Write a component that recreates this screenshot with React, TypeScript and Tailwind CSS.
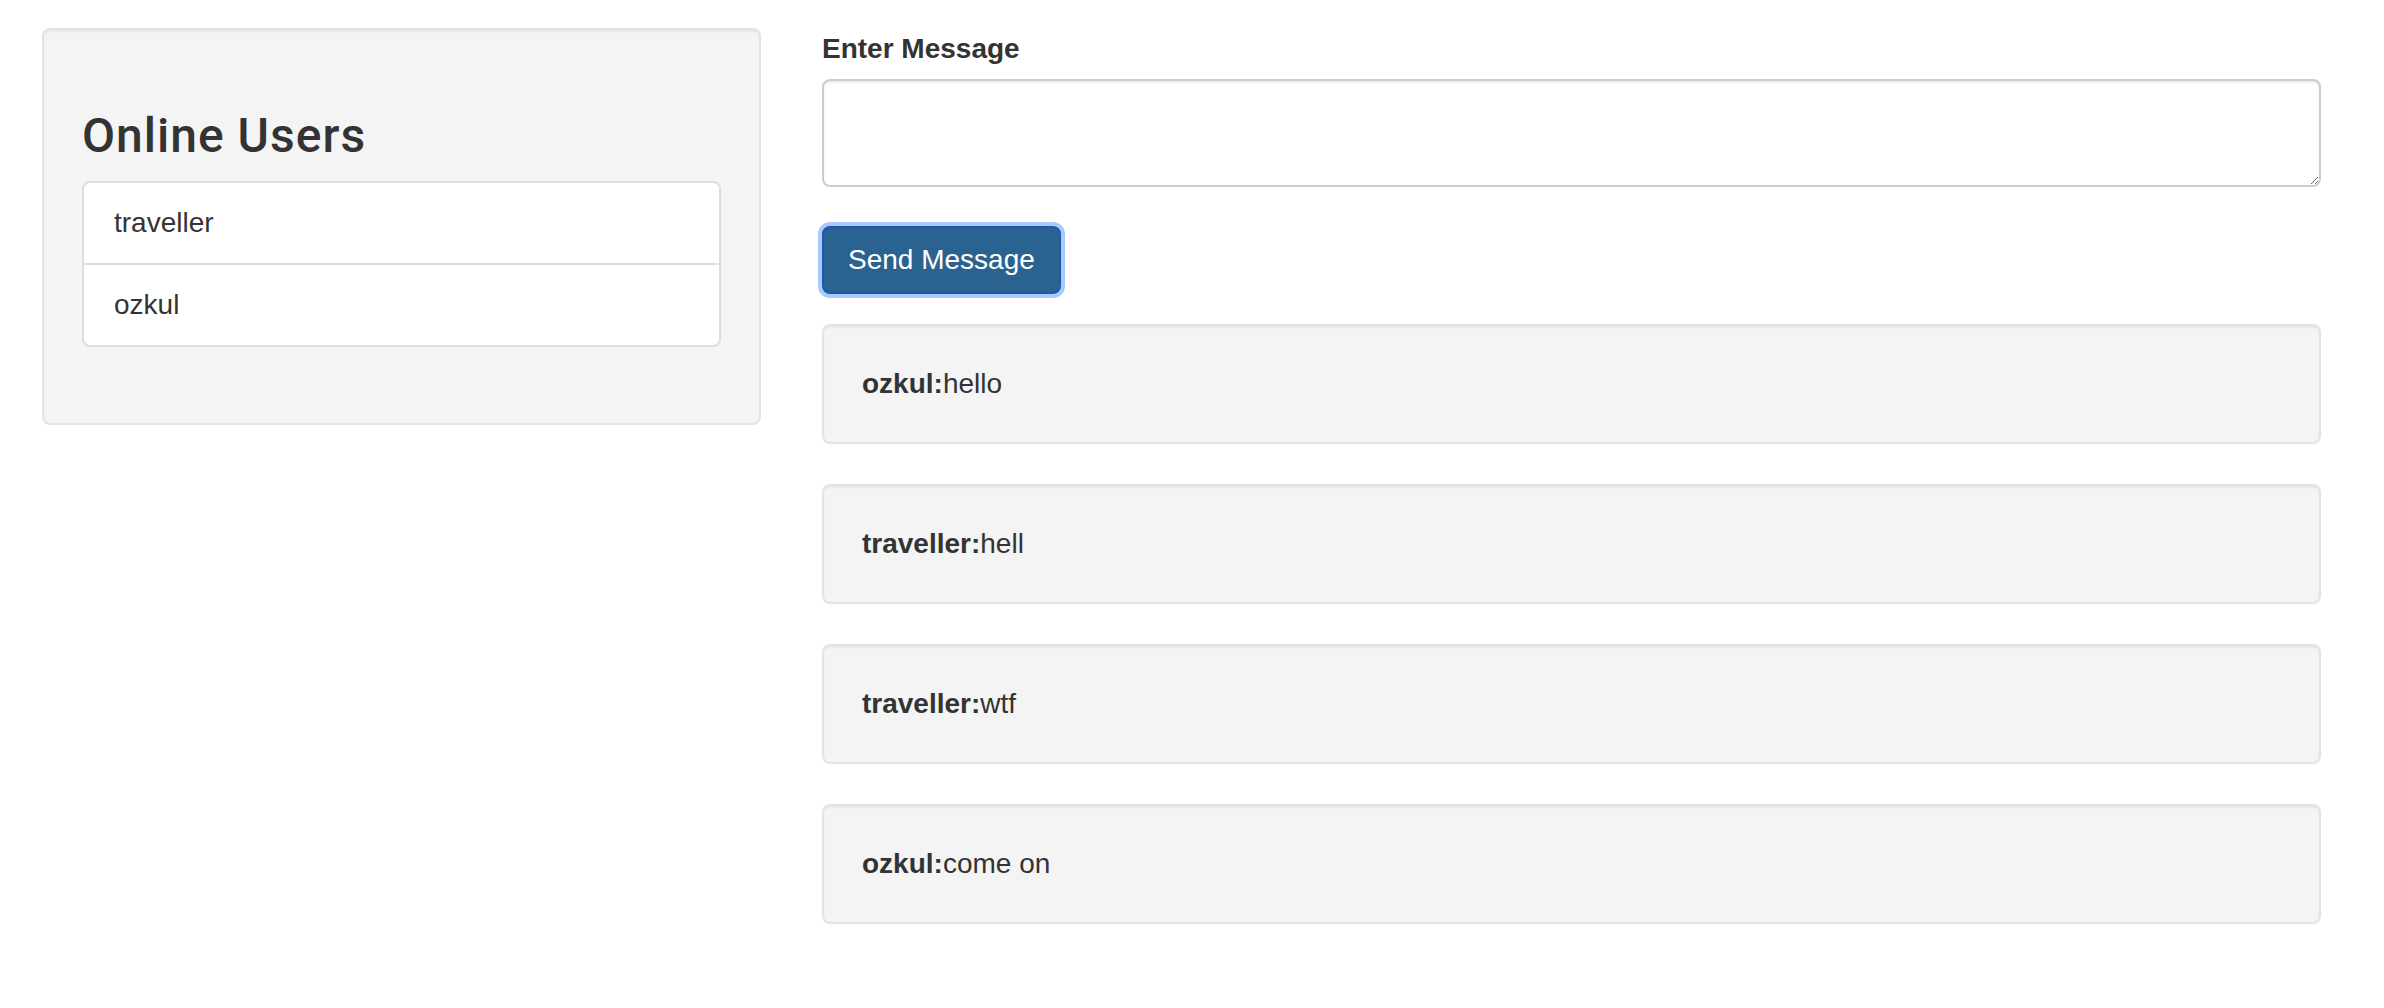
import React from "react";

const users = ["traveller", "ozkul"];
const messages = [
  { user: "ozkul", text: "hello" },
  { user: "traveller", text: "hell" },
  { user: "traveller", text: "wtf" },
  { user: "ozkul", text: "come on" },
];

export default function App() {
  return (
    <div
      className="min-h-[1008px] bg-white text-[#333333]"
      style={{ fontFamily: '"Liberation Sans", Arial, Helvetica, sans-serif' }}
    >
      <div className="flex items-start gap-[61px] pl-[42px] pt-[28px]">
        {/* Left column */}
        <div className="w-[719px] shrink-0 rounded-[8px] border-2 border-[#e3e3e3] bg-[#f4f4f4] p-[38px] shadow-[inset_0_2px_2px_rgba(0,0,0,0.05)]">
          <h3 className="mt-[42px] mb-[18px] font-['Roboto',_'Liberation_Sans',_sans-serif] text-[48px] leading-[1.1] font-medium tracking-[1px] text-[#333333]">
            Online Users
          </h3>
          <ul className="mb-[38px]">
            {users.map((u, i) => (
              <li
                key={u}
                className={
                  "border-2 border-[#dddddd] bg-white px-[30px] py-[20px] text-[28px] leading-[40px] " +
                  (i === 0 ? "rounded-t-[8px] " : "mt-[-2px] ") +
                  (i === users.length - 1 ? "rounded-b-[8px]" : "")
                }
              >
                {u}
              </li>
            ))}
          </ul>
        </div>

        {/* Right column */}
        <div className="w-[1499px] shrink-0">
          <label className="mt-[1px] mb-[10px] block text-[28px] leading-[40px] font-bold">
            Enter Message
          </label>
          <textarea
            rows={2}
            className="block h-[108px] w-full rounded-[8px] border-2 border-[#cccccc] bg-white px-[24px] py-[12px] text-[28px] leading-[40px] shadow-[inset_0_2px_2px_rgba(0,0,0,0.075)] outline-none"
          />
          <div className="mt-[39px]">
            <button className="rounded-[8px] border-2 border-[#1f57b6] bg-[#2b6390] px-[24px] py-[12px] text-[28px] leading-[40px] text-white shadow-[0_0_0_4px_#a9cbfa]">
              Send Message
            </button>
          </div>
          <div className="mt-[30px] flex flex-col gap-[40px]">
            {messages.map((m, i) => (
              <div
                key={i}
                className="h-[120px] rounded-[8px] border-2 border-[#e3e3e3] bg-[#f4f4f4] px-[38px] py-[38px] text-[28px] leading-[40px] shadow-[inset_0_2px_2px_rgba(0,0,0,0.05)]"
              >
                <strong className="font-bold">{m.user}:</strong>
                {m.text}
              </div>
            ))}
          </div>
        </div>
      </div>
    </div>
  );
}
